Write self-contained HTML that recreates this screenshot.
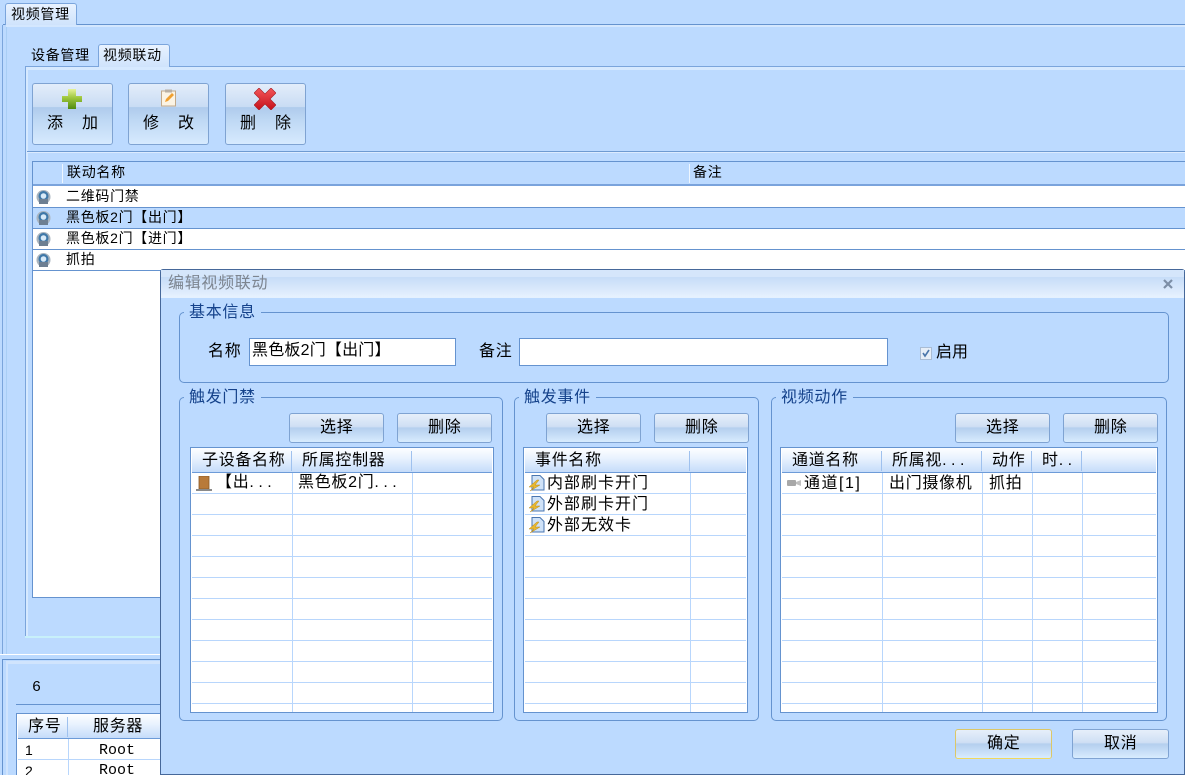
<!DOCTYPE html>
<html><head><meta charset="utf-8"><style>
html,body{margin:0;padding:0;width:1185px;height:775px;overflow:hidden;}
body{position:relative;background:#bcdaff;font-family:"Liberation Sans","WenQuanYi Zen Hei","Noto Sans CJK SC",sans-serif;font-size:16px;color:#000;}
div,svg,span.t{position:absolute;box-sizing:border-box;}
.t{position:absolute;white-space:nowrap;line-height:20px;height:20px;letter-spacing:.7px;}
.s{font-size:14px;letter-spacing:.7px;}
.d{letter-spacing:4.5px;}
.l{position:absolute;background:#6593cf;}
.tab{background:linear-gradient(#e8f2ff,#cfe3fc);border:1px solid #7ba5dc;border-bottom:0;border-radius:3px 3px 0 0;}
.tb{border:1px solid #7fa3d2;border-radius:3px;background:linear-gradient(#e3edfa 0,#c9dcf4 38%,#afcbec 39%,#bed8f4 60%,#d6eafe 100%);}
.btn{border:1px solid #7fa3d2;border-radius:3px;background:linear-gradient(#e6effa 0,#cfdff4 45%,#b5cfee 50%,#c2daf5 70%,#d8ecfe 100%);}
.grp{border:1px solid #6593cf;border-radius:5px;}
.gt{color:#15428b;background:#bcdaff;padding:0 5px;}
.grid{background:#fff;border:1px solid #6593cf;}
.gh{background:linear-gradient(#fdfeff,#eaf3fe 40%,#c5dcfa);border-bottom:1px solid #6d9bd8;}
.rows{background:repeating-linear-gradient(#fff 0,#fff 20px,#b8d6fc 20px,#b8d6fc 21px);}
.v{position:absolute;width:1px;background:#b8d6fc;}
.hs{position:absolute;width:1px;background:#9fc1ee;top:3px;height:20px;}
</style></head><body>
<div style="left:0;top:0;width:1185px;height:775px;overflow:hidden">

<!-- outer frame -->
<div class="l" style="left:2px;top:25px;width:1px;height:630px;background:#7ba5dc"></div>
<div class="l" style="left:6px;top:25px;width:1px;height:630px;background:#a9cef5"></div>
<div class="l" style="left:3px;top:24px;width:1182px;height:1px"></div>
<div style="left:6px;top:25px;width:1179px;height:2px;background:#d4e7fe"></div>
<div class="tab" style="left:5px;top:3px;width:72px;height:22px"></div>
<span class="t s" style="left:11px;top:4px">视频管理</span>

<!-- sub tabs -->
<span class="t s" style="left:31px;top:45px">设备管理</span>
<div class="l" style="left:25px;top:66px;width:1160px;height:1px;background:#7ba5dc"></div>
<div style="left:25px;top:67px;width:1160px;height:3px;background:#d6e9ff"></div>
<div class="tab" style="left:98px;top:44px;width:72px;height:23px"></div>
<span class="t s" style="left:103px;top:45px">视频联动</span>
<div style="left:25px;top:67px;width:1px;height:571px;background:#7ba5dc"></div>
<div style="left:26px;top:67px;width:2px;height:571px;background:#d6e9ff"></div>
<div style="left:25px;top:636px;width:140px;height:2px;background:#c8f0fa"></div>

<!-- toolbar -->
<div class="tb" style="left:32px;top:83px;width:81px;height:62px"></div>
<svg style="left:62px;top:89px" width="20" height="20" viewBox="0 0 20 20"><defs><linearGradient id="g1" x1="0" y1="0" x2="0" y2="1"><stop offset="0" stop-color="#e6f29a"/><stop offset=".45" stop-color="#9cc63c"/><stop offset="1" stop-color="#4f8a10"/></linearGradient></defs><path d="M6 0h8v7h6v6h-6v7H6v-7H0V7h6z" fill="url(#g1)"/></svg>
<span class="t" style="left:47px;top:114px;letter-spacing:19px">添加</span>

<div class="tb" style="left:128px;top:83px;width:81px;height:62px"></div>
<svg style="left:160px;top:89px" width="17" height="18" viewBox="0 0 17 18"><rect x="1.5" y="2" width="14" height="15" fill="#fbf3e4" stroke="#c2a98a"/><rect x="5" y="0.5" width="7" height="3" fill="#b9b0a5"/><path d="M5 13l1-3 6-6 2 2-6 6z" fill="#f0a030"/></svg>
<span class="t" style="left:143px;top:114px;letter-spacing:19px">修改</span>

<div class="tb" style="left:225px;top:83px;width:81px;height:62px"></div>
<svg style="left:254px;top:88px" width="22" height="22" viewBox="0 0 22 22"><defs><linearGradient id="g2" x1="0" y1="0" x2="0" y2="1"><stop offset="0" stop-color="#f4565a"/><stop offset="1" stop-color="#c4101a"/></linearGradient></defs><path d="M5 0l6 6 6-6 5 5-6 6 6 6-5 5-6-6-6 6-5-5 6-6-6-6z" fill="url(#g2)" stroke="#a51c20" stroke-width=".6"/></svg>
<span class="t" style="left:240px;top:114px;letter-spacing:19px">删除</span>

<div style="left:27px;top:151px;width:1158px;height:1px;background:#6f9bd2"></div>
<div style="left:27px;top:152px;width:1158px;height:1px;background:#dcebff"></div>

<!-- main list -->
<div style="left:32px;top:161px;width:1153px;height:437px;background:#fff;border-left:1px solid #6593cf;border-bottom:1px solid #6593cf"></div>
<div style="left:33px;top:161px;width:1152px;height:25px;background:#bcdaff;border-top:1px solid #6593cf;border-bottom:2px solid #7aa3dc"></div>
<div style="left:62px;top:164px;width:1px;height:19px;background:#eef6ff"></div>
<div style="left:689px;top:164px;width:1px;height:19px;background:#eef6ff"></div>
<span class="t s" style="left:67px;top:162px">联动名称</span>
<span class="t s" style="left:693px;top:162px">备注</span>
<div style="left:33px;top:207px;width:1152px;height:22px;background:#bcdaff;border-top:1px solid #6593cf;border-bottom:1px solid #6593cf"></div>
<div style="left:33px;top:249px;width:1152px;height:1px;background:#6593cf"></div>
<div style="left:33px;top:270px;width:1152px;height:1px;background:#6593cf"></div>
<svg style="left:36px;top:190px" width="16" height="15" viewBox="0 0 16 15"><circle cx="7.5" cy="7" r="7" fill="#a9b4bf"/><circle cx="7.5" cy="6" r="5" fill="#3f78a8"/><circle cx="7.5" cy="6" r="2.8" fill="#d8eaf8"/><rect x="3" y="9" width="9" height="5" fill="#6d7f92"/></svg>
<svg style="left:36px;top:211px" width="16" height="15" viewBox="0 0 16 15"><circle cx="7.5" cy="7" r="7" fill="#a9b4bf"/><circle cx="7.5" cy="6" r="5" fill="#3f78a8"/><circle cx="7.5" cy="6" r="2.8" fill="#d8eaf8"/><rect x="3" y="9" width="9" height="5" fill="#6d7f92"/></svg>
<svg style="left:36px;top:232px" width="16" height="15" viewBox="0 0 16 15"><circle cx="7.5" cy="7" r="7" fill="#a9b4bf"/><circle cx="7.5" cy="6" r="5" fill="#3f78a8"/><circle cx="7.5" cy="6" r="2.8" fill="#d8eaf8"/><rect x="3" y="9" width="9" height="5" fill="#6d7f92"/></svg>
<svg style="left:36px;top:253px" width="16" height="15" viewBox="0 0 16 15"><circle cx="7.5" cy="7" r="7" fill="#a9b4bf"/><circle cx="7.5" cy="6" r="5" fill="#3f78a8"/><circle cx="7.5" cy="6" r="2.8" fill="#d8eaf8"/><rect x="3" y="9" width="9" height="5" fill="#6d7f92"/></svg>
<span class="t s" style="left:66px;top:186px">二维码门禁</span>
<span class="t s" style="left:66px;top:207px">黑色板2门【出门】</span>
<span class="t s" style="left:66px;top:228px">黑色板2门【进门】</span>
<span class="t s" style="left:66px;top:249px">抓拍</span>

<!-- lower panel -->
<div style="left:0;top:654px;width:165px;height:1px;background:#fff"></div>
<div style="left:2px;top:659px;width:165px;height:1px;background:#6593cf"></div>
<div style="left:2px;top:659px;width:1px;height:116px;background:#6593cf"></div>
<div style="left:6px;top:661px;width:160px;height:3px;background:#d0e4fd"></div>
<div style="left:6px;top:661px;width:2px;height:114px;background:#d0e4fd"></div>
<span class="t" style="left:32px;top:678px;font-family:'Liberation Mono',monospace;font-size:15px">6</span>
<div style="left:16px;top:704px;width:150px;height:1px;background:#6593cf"></div>
<div style="left:16px;top:713px;width:150px;height:70px;background:#fff;border:1px solid #6593cf"></div>
<div class="gh" style="left:18px;top:714px;width:148px;height:25px"></div>
<div class="hs" style="left:67px;top:717px"></div>
<span class="t" style="left:28px;top:717px">序号</span>
<span class="t" style="left:93px;top:717px">服务器</span>
<div class="v" style="left:68px;top:739px;height:36px"></div>
<div style="left:18px;top:759px;width:148px;height:1px;background:#b8d6fc"></div>
<span class="t" style="left:25px;top:740px;font-size:14px">1</span>
<span class="t" style="left:99px;top:741px;font-family:'Liberation Mono',monospace;font-size:15px;letter-spacing:0">Root</span>
<span class="t" style="left:25px;top:761px;font-size:14px">2</span>
<span class="t" style="left:99px;top:761px;font-family:'Liberation Mono',monospace;font-size:15px;letter-spacing:0">Root</span>

<!-- dialog -->
<div style="left:160px;top:269px;width:1025px;height:506px;background:#bcdaff;border:1px solid #46689a;border-radius:3px 3px 0 0"></div>
<div style="left:161px;top:270px;width:1023px;height:27px;background:linear-gradient(#d5e6fb 0,#d5e6fb 25%,#c6dcf8 26%,#e6f1fe 100%)"></div>
<div style="left:161px;top:297px;width:1023px;height:1px;background:#e4f1ff"></div>
<span class="t" style="left:168px;top:274px;color:#7d8590">编辑视频联动</span>
<svg style="left:1163px;top:279px" width="10" height="10" viewBox="0 0 10 10"><path d="M1 1l8 8M9 1l-8 8" stroke="#7c8ea6" stroke-width="2.2"/></svg>

<div class="grp" style="left:179px;top:312px;width:990px;height:71px"></div>
<span class="t gt" style="left:184px;top:303px">基本信息</span>
<span class="t" style="left:208px;top:342px">名称</span>
<div style="left:249px;top:338px;width:207px;height:28px;background:#fff;border:1px solid #6593cf"></div>
<span class="t" style="left:252px;top:341px;letter-spacing:.2px">黑色板2门【出门】</span>
<span class="t" style="left:479px;top:342px">备注</span>
<div style="left:519px;top:338px;width:369px;height:28px;background:#fff;border:1px solid #6593cf"></div>
<svg style="left:920px;top:347px" width="12" height="13" viewBox="0 0 12 13"><rect x=".5" y=".5" width="11" height="12" fill="#e6eef8" stroke="#a9bcd4"/><path d="M3 6l2 3 4-6" fill="none" stroke="#4a76aa" stroke-width="1.6"/></svg>
<span class="t" style="left:936px;top:343px;letter-spacing:0">启用</span>

<!-- group 1 -->
<div class="grp" style="left:179px;top:397px;width:324px;height:324px"></div>
<span class="t gt" style="left:184px;top:388px">触发门禁</span>
<div class="btn" style="left:289px;top:413px;width:95px;height:30px"></div>
<span class="t" style="left:320px;top:418px">选择</span>
<div class="btn" style="left:397px;top:413px;width:95px;height:30px"></div>
<span class="t" style="left:428px;top:418px">删除</span>
<div class="grid" style="left:190px;top:447px;width:304px;height:266px"></div>
<div class="rows" style="left:192px;top:473px;width:300px;height:239px"></div>
<div class="gh" style="left:192px;top:448px;width:300px;height:25px"></div>
<div class="hs" style="left:291px;top:451px"></div>
<div class="hs" style="left:411px;top:451px"></div>
<div class="v" style="left:292px;top:473px;height:239px"></div>
<div class="v" style="left:412px;top:473px;height:239px"></div>
<span class="t" style="left:202px;top:451px">子设备名称</span>
<span class="t" style="left:302px;top:451px">所属控制器</span>
<svg style="left:196px;top:476px" width="16" height="16" viewBox="0 0 16 16"><rect x="3" y="0" width="10" height="13" fill="#b87a3a" stroke="#8a5a28" stroke-width=".8"/><rect x="0" y="13" width="16" height="2" fill="#8a8a8a"/></svg>
<span class="t" style="left:216px;top:473px">【出<span class="d">...</span></span>
<span class="t" style="left:298px;top:473px">黑色板2门<span class="d">...</span></span>

<!-- group 2 -->
<div class="grp" style="left:514px;top:397px;width:245px;height:324px"></div>
<span class="t gt" style="left:519px;top:388px">触发事件</span>
<div class="btn" style="left:546px;top:413px;width:95px;height:30px"></div>
<span class="t" style="left:577px;top:418px">选择</span>
<div class="btn" style="left:654px;top:413px;width:95px;height:30px"></div>
<span class="t" style="left:685px;top:418px">删除</span>
<div class="grid" style="left:523px;top:447px;width:225px;height:266px"></div>
<div class="rows" style="left:525px;top:473px;width:221px;height:239px"></div>
<div class="gh" style="left:525px;top:448px;width:221px;height:25px"></div>
<div class="hs" style="left:689px;top:451px"></div>
<div class="v" style="left:690px;top:473px;height:239px"></div>
<span class="t" style="left:535px;top:451px">事件名称</span>
<svg style="left:528px;top:475px" width="17" height="17" viewBox="0 0 17 17"><path d="M4 .5h8l4 4v10.5H4z" fill="#cfe2f8" stroke="#4a76b0"/><path d="M9 5L1 12h5l-4 4 10-6H7l4-5z" fill="#e8b830" stroke="#b98a1c" stroke-width=".5"/></svg>
<svg style="left:528px;top:496px" width="17" height="17" viewBox="0 0 17 17"><path d="M4 .5h8l4 4v10.5H4z" fill="#cfe2f8" stroke="#4a76b0"/><path d="M9 5L1 12h5l-4 4 10-6H7l4-5z" fill="#e8b830" stroke="#b98a1c" stroke-width=".5"/></svg>
<svg style="left:528px;top:517px" width="17" height="17" viewBox="0 0 17 17"><path d="M4 .5h8l4 4v10.5H4z" fill="#cfe2f8" stroke="#4a76b0"/><path d="M9 5L1 12h5l-4 4 10-6H7l4-5z" fill="#e8b830" stroke="#b98a1c" stroke-width=".5"/></svg>
<span class="t" style="left:547px;top:474px;letter-spacing:1px">内部刷卡开门</span>
<span class="t" style="left:547px;top:495px;letter-spacing:1px">外部刷卡开门</span>
<span class="t" style="left:547px;top:516px;letter-spacing:1px">外部无效卡</span>

<!-- group 3 -->
<div class="grp" style="left:771px;top:397px;width:396px;height:324px"></div>
<span class="t gt" style="left:776px;top:388px">视频动作</span>
<div class="btn" style="left:955px;top:413px;width:95px;height:30px"></div>
<span class="t" style="left:986px;top:418px">选择</span>
<div class="btn" style="left:1063px;top:413px;width:95px;height:30px"></div>
<span class="t" style="left:1094px;top:418px">删除</span>
<div class="grid" style="left:780px;top:447px;width:378px;height:266px"></div>
<div class="rows" style="left:782px;top:473px;width:374px;height:239px"></div>
<div class="gh" style="left:782px;top:448px;width:374px;height:25px"></div>
<div class="hs" style="left:881px;top:451px"></div>
<div class="hs" style="left:981px;top:451px"></div>
<div class="hs" style="left:1031px;top:451px"></div>
<div class="hs" style="left:1081px;top:451px"></div>
<div class="v" style="left:882px;top:473px;height:239px"></div>
<div class="v" style="left:982px;top:473px;height:239px"></div>
<div class="v" style="left:1032px;top:473px;height:239px"></div>
<div class="v" style="left:1082px;top:473px;height:239px"></div>
<span class="t" style="left:792px;top:451px">通道名称</span>
<span class="t" style="left:892px;top:451px">所属视<span class="d">...</span></span>
<span class="t" style="left:992px;top:451px">动作</span>
<span class="t" style="left:1042px;top:451px">时<span class="d">..</span></span>
<svg style="left:787px;top:479px" width="14" height="8" viewBox="0 0 14 8"><rect x="0" y="1" width="9" height="6" rx="1" fill="#a8a8a8"/><path d="M9 3l5-2v6l-5-2z" fill="#c0c0c0"/></svg>
<span class="t" style="left:804px;top:474px;letter-spacing:1.5px">通道[1]</span>
<span class="t" style="left:889px;top:474px">出门摄像机</span>
<span class="t" style="left:989px;top:474px">抓拍</span>

<!-- footer -->
<div class="btn" style="left:955px;top:729px;width:97px;height:30px;border:1px solid #dcc766;border-bottom-color:#f0d85c"></div>
<span class="t" style="left:987px;top:734px">确定</span>
<div class="btn" style="left:1072px;top:729px;width:97px;height:30px"></div>
<span class="t" style="left:1104px;top:734px">取消</span>
</div>
</body></html>
